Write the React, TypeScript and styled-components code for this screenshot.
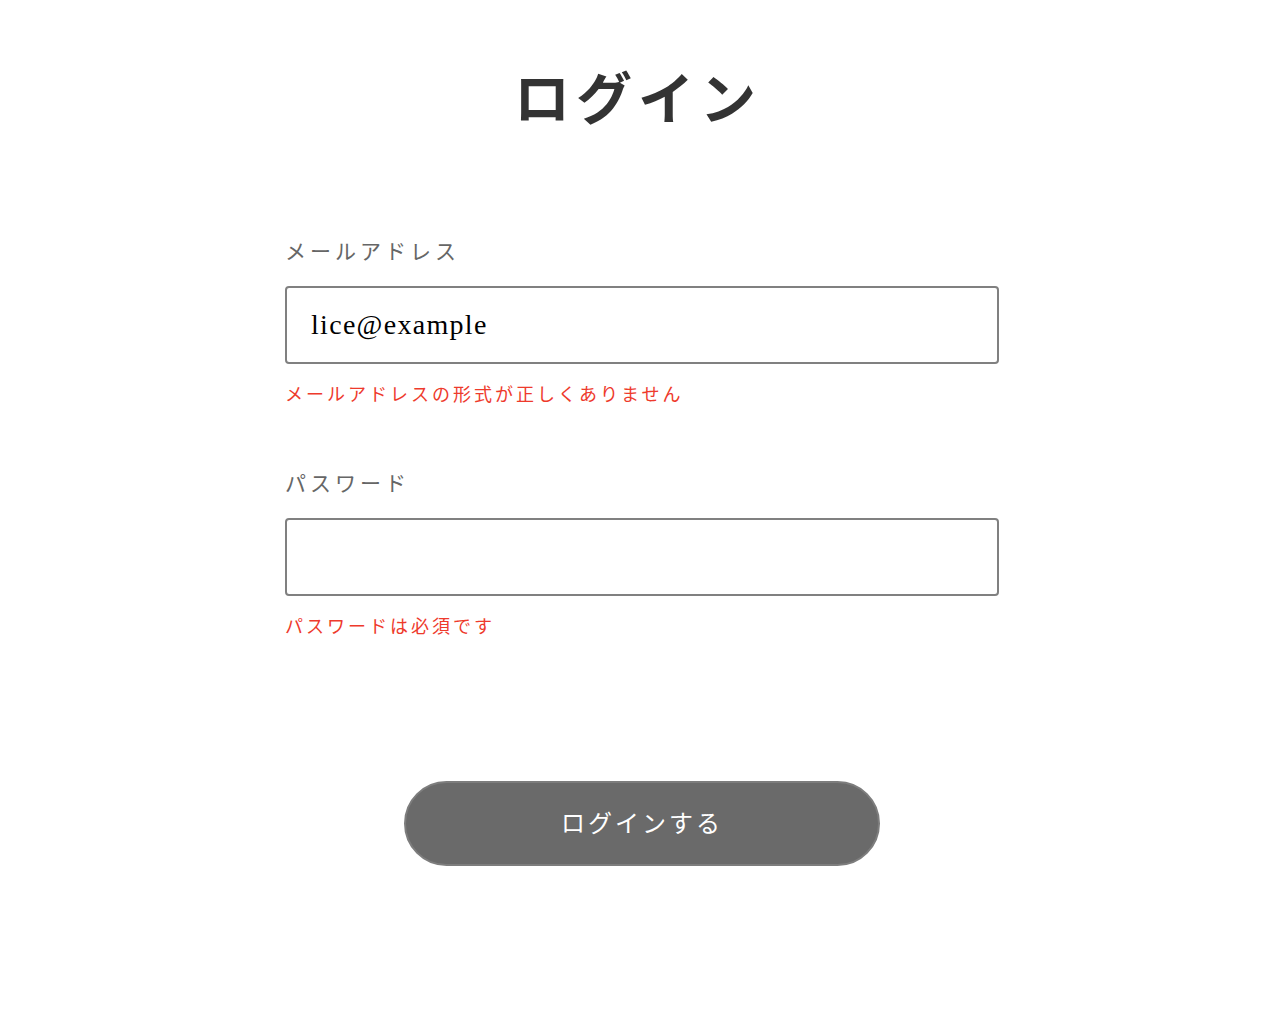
import React from "react";
import styled, { createGlobalStyle } from "styled-components";

const GlobalStyle = createGlobalStyle`
  html, body {
    margin: 0;
    padding: 0;
    background: #ffffff;
  }
  body {
    font-family: "Liberation Serif", "Noto Sans CJK JP", serif;
    color: #333333;
  }
`;

const Page = styled.main`
  display: flex;
  flex-direction: column;
  align-items: center;
  padding-top: 53px;
  padding-bottom: 145px;
`;

const Title = styled.h1`
  margin: 0;
  font-family: "Noto Sans CJK JP", sans-serif;
  font-weight: 700;
  font-size: 56px;
  line-height: 84px;
  letter-spacing: 6px;
  color: #333333;
`;

const Form = styled.form`
  width: 714px;
  margin-top: 98px;
  transform: translateX(4px);
  display: flex;
  flex-direction: column;
`;

const Field = styled.div`
  display: flex;
  flex-direction: column;
  margin-bottom: 60px;
`;

const Label = styled.label`
  font-family: "Noto Sans CJK JP", sans-serif;
  font-size: 21px;
  line-height: 30px;
  letter-spacing: 4px;
  color: #666666;
  margin-bottom: 21px;
`;

const Input = styled.input`
  box-sizing: border-box;
  width: 100%;
  height: 78px;
  border: 2px solid #808080;
  border-radius: 4px;
  padding: 0 24px;
  font-family: "Liberation Serif", "Noto Sans CJK JP", serif;
  font-size: 28px;
  letter-spacing: 1.3px;
  color: #000000;
  background: #ffffff;
  outline: none;
`;

const ErrorText = styled.p`
  margin: 16px 0 0;
  font-family: "Noto Sans CJK JP", sans-serif;
  font-size: 18px;
  line-height: 27px;
  letter-spacing: 3px;
  color: #ee3a2c;
`;

const ButtonRow = styled.div`
  display: flex;
  justify-content: center;
  margin-top: 82px;
`;

const SubmitButton = styled.button`
  box-sizing: border-box;
  width: 476px;
  height: 85px;
  padding: 0 0 4px;
  border-radius: 43px;
  border: 2px solid #7d7d7d;
  background: #6a6a6a;
  color: #ffffff;
  font-family: "Noto Sans CJK JP", sans-serif;
  font-size: 24px;
  letter-spacing: 3px;
  cursor: pointer;
`;

export default function App() {
  return (
    <>
      <GlobalStyle />
      <Page>
        <Title>ログイン</Title>
        <Form onSubmit={(e) => e.preventDefault()}>
          <Field>
            <Label htmlFor="email">メールアドレス</Label>
            <Input id="email" type="text" defaultValue="lice@example" />
            <ErrorText>メールアドレスの形式が正しくありません</ErrorText>
          </Field>
          <Field>
            <Label htmlFor="password">パスワード</Label>
            <Input id="password" type="password" defaultValue="" />
            <ErrorText>パスワードは必須です</ErrorText>
          </Field>
          <ButtonRow>
            <SubmitButton type="submit">ログインする</SubmitButton>
          </ButtonRow>
        </Form>
      </Page>
    </>
  );
}
